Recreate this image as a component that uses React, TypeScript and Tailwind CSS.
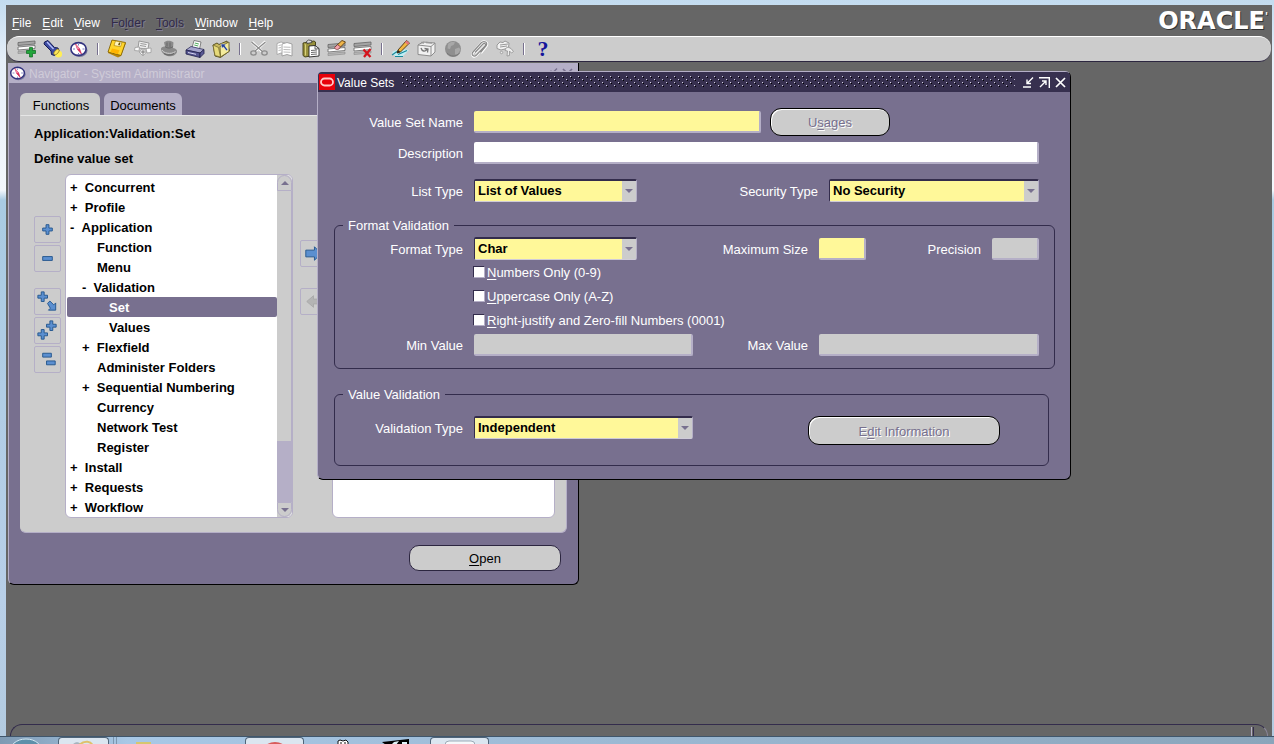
import { useState } from "react";
import type { ReactNode } from "react";

const FONT = "font-['Liberation_Sans',Arial,sans-serif]";

type IconProps = { children: ReactNode; size?: string };

function Icon({ children, size = "size-5" }: IconProps) {
    return (
        <svg viewBox="0 0 20 20" className={`${size} shrink-0`} fill="none" aria-hidden="true">
            {children}
        </svg>
    );
}

function FormLines({ y = 4 }: { y?: number }) {
    return (
        <g transform={`translate(0 ${y})`}>
            <path d="M1 1.500 18 0v3L1 4.500z" fill="#a5a5a5" stroke="#666" strokeWidth=".8" />
            <path d="M1 6 18 4.500v3L1 9z" fill="#fff" stroke="#666" strokeWidth=".8" />
            <path d="M1 10.500 18 9v2L1 12.500z" fill="#b9b9b9" stroke="#888" strokeWidth=".6" />
        </g>
    );
}

function CompassIcon({ size }: { size?: string }) {
    return (
        <Icon size={size}>
            <ellipse cx="10.500" cy="11.500" rx="8" ry="6.500" fill="#77779c" />
            <ellipse cx="9.500" cy="10" rx="7.600" ry="6.400" fill="#fff" stroke="#33337f" strokeWidth="1.600" />
            <path d="M9.500 5v1.500M9.500 14v1.500M4 10h2M13.500 10h2" stroke="#7a7ac0" />
            <path d="m6.500 5 4 4.500 2 5.500-4-4.500z" fill="#e52a5c" stroke="#c01848" strokeWidth=".6" />
            <path d="m6.500 5 4 4.500-2 1z" fill="#f38aa5" />
        </Icon>
    );
}

function NewIcon() {
    return (
        <Icon>
            <FormLines y={2} />
            <path d="M12.500 8.500h3v3h3v3h-3v3.500h-3v-3.500h-3v-3h3z" fill="#22a53b" stroke="#0c6b20" strokeWidth=".7" />
        </Icon>
    );
}

function FindIcon() {
    return (
        <Icon>
            <circle cx="15.500" cy="15" r="3.600" fill="#ffee55" />
            <path d="M1.500 3 5 1.500l6.500 7 3.500.5 1 3-4.500 4.500-3-1-.5-3.500L1 5z" fill="#3c4ba0" stroke="#141b55" />
            <path d="m4 3 6.500 7" stroke="#b9c4ff" strokeWidth="1.300" />
            <ellipse cx="13.500" cy="13" rx="1.800" ry="3.500" transform="rotate(42 13.500 13)" fill="#ffe65a" stroke="#8d7a20" strokeWidth=".7" />
        </Icon>
    );
}

function SaveIcon() {
    return (
        <Icon>
            <path d="m5 1 14 3-5 13-3 1.500L1 14z" fill="#b8860b" />
            <path d="m5 1 13.500 2.500-4.500 13L1 13z" fill="#ffd42a" stroke="#7a5a00" strokeWidth=".8" />
            <path d="m8.500 2 6.500 1.200-1.500 4.500L7 6.500z" fill="#fff6c0" stroke="#a37b00" strokeWidth=".6" />
            <path d="m12 3.500 1.500.3-.9 2.600-1.500-.3z" fill="#6a5200" />
            <path d="m5 9.500 7.500 1.800-1.700 4L3.500 13z" fill="#ffb400" />
        </Icon>
    );
}

function NextStepIcon() {
    return (
        <Icon>
            <path d="m6 2 10 2-1 6-10-1z" fill="#eee" stroke="#999" />
            <path d="m7.500 4.500 6 1M7 6.500l6 1" stroke="#999" />
            <path d="M2 8.500 6.500 8l-.5 4-4.500-.5zM6 13l4-3.500L13.500 13 10 17zM13 9.500l5-.5v4.500L14 14z" fill="#fafafa" stroke="#9c9c9c" strokeWidth=".8" />
            <path d="M10 10.500v5.500M7.500 13h5" stroke="#777" />
        </Icon>
    );
}

function HatIcon() {
    return (
        <Icon>
            <path d="M2 10c0-2 3-2.500 4-2.500L5 3.500C7 1 12 1 14.500 3.500L14 9c3 .5 4.500 2 4 4-1 3.500-6 5-9.500 4S2 13 2 10z" fill="#8a8a8a" />
            <path d="M3 11c1 3 9 5 13.500 1.500" stroke="#cfcfcf" />
            <path d="M6 7.500c2 2 6 2 8 0M8 3.500v4M11 3.500v4.500" stroke="#666" />
            <path d="M5 14.500c3 2 7 2 10 0" stroke="#5f5f5f" />
        </Icon>
    );
}

function PrintIcon() {
    return (
        <Icon>
            <path d="m7 9 2-7.500 7 1.500-1.500 7z" fill="#fff" stroke="#666" strokeWidth=".8" />
            <path d="m9.800 4 4 1M9.300 6l4 1" stroke="#4cab5a" />
            <path d="m1 11 5-3.500 13 3L15 14z" fill="#a5a5cc" stroke="#32325e" strokeWidth=".8" />
            <path d="m1 11 14 3v4.500L1 15z" fill="#55558f" stroke="#20204a" strokeWidth=".8" />
            <path d="m15 14 4-3.500v4l-4 4z" fill="#5b5b96" stroke="#20204a" strokeWidth=".8" />
            <path d="m3 13.500 8 1.800" stroke="#d8d8f2" />
        </Icon>
    );
}

function CloseFormIcon() {
    return (
        <Icon>
            <path d="m2 6 4-2 2 1.500L16 2l2.500 10-9 6.500L4 17z" fill="#c8b95e" stroke="#4f481c" strokeWidth=".9" />
            <path d="M9 7.500 18 3v9.500L9.500 18z" fill="#f4ec9c" stroke="#6b6228" strokeWidth=".9" />
            <path d="m2 6 5.500 2.500 2 9.500L4 16.500z" fill="#e6da7a" stroke="#6b6228" strokeWidth=".7" />
            <path d="m10 5 5 .2-1.200 1.500 3 4-1.500 1-2.800-3.700-1.500 1.200z" fill="#1f3f9a" stroke="#fff" strokeWidth=".4" />
        </Icon>
    );
}

function CutIcon() {
    return (
        <Icon>
            <path d="m3 3 10 9.500M16.500 2.500 6.500 12" stroke="#fff" strokeWidth="2.800" />
            <path d="m2.500 3 11 9.500M16.500 3 6 12" stroke="#8b8b8b" strokeWidth="1.300" />
            <ellipse cx="4.500" cy="14" rx="2.700" ry="2.100" stroke="#8b8b8b" strokeWidth="1.300" />
            <ellipse cx="15.500" cy="14" rx="2.700" ry="2.100" stroke="#8b8b8b" strokeWidth="1.300" />
        </Icon>
    );
}

function CopyIcon() {
    return (
        <Icon>
            <path d="m2 4.500 4-1.500 4 1v11L6 14l-4 1.500z" fill="#fff" stroke="#a5a5a5" strokeWidth=".9" />
            <path d="m7 5 5-1.500L17 5v12l-5-1.500L7 17z" fill="#fff" stroke="#9a9a9a" strokeWidth=".9" />
            <path d="M3.500 6.500 6 6M3.500 9 6 8.500M3.500 11.500 6 11M8.500 8l7 .3M8.500 10.500l7 .3M8.500 13l7 .3" stroke="#aaa" strokeWidth=".8" />
        </Icon>
    );
}

function PasteIcon() {
    return (
        <Icon>
            <path d="m2 4 11-2 1.500 1v13L4 18l-2-1.500z" fill="#98913d" stroke="#3e3b12" strokeWidth=".9" />
            <path d="m3.500 5 1 .5v11" stroke="#d9d27b" />
            <path d="m5.500 2.500 2-1.500 3 .5.500 2-5 1z" fill="#ddd" stroke="#333" strokeWidth=".8" />
            <path d="m8 7 6-.5 4 3V17l-10 1z" fill="#fff" stroke="#222" strokeWidth=".9" />
            <path d="M14 6.500v3.500l4-.3M10 11.500l6-.5M10 13.500l6-.5M10 15.500l6-.5" stroke="#444" strokeWidth=".8" />
        </Icon>
    );
}

function ClearIcon() {
    return (
        <Icon>
            <FormLines />
            <path d="m8 8 7-6.500L18.500 3 11.500 10z" fill="#f0b64a" stroke="#5a3a0c" strokeWidth=".9" />
            <path d="m8 8 2.500-2.300 3.200 2.200L11.500 10c-1.500 1.500-5-.5-3.500-2z" fill="#f5a3ac" stroke="#6b3036" strokeWidth=".7" />
        </Icon>
    );
}

function DeleteIcon() {
    return (
        <Icon>
            <FormLines y={3} />
            <path d="m10.500 10.500 7 7.500M17.500 10 11 18" stroke="#d4141c" strokeWidth="2.300" />
        </Icon>
    );
}

function EditIcon() {
    return (
        <Icon>
            <path d="m1 13 7-3 10 1-6 6H4z" fill="#bfeef4" />
            <path d="m1 16 5-3.500M4 17.500h8M7 15.500l9-4" stroke="#188b9c" strokeWidth="1.200" />
            <path d="m7 11 8.500-9.500L18.500 4 9.500 13 6 14z" fill="#f2b640" stroke="#4a300c" strokeWidth=".9" />
            <path d="m15.500 1.500 3 2.500-1.700 1.700-2.900-2.400z" fill="#e5737b" />
            <path d="m7 11-1 3 3.500-1z" fill="#222" />
        </Icon>
    );
}

function ZoomIcon() {
    return (
        <Icon>
            <path d="m1 6 5-3 12 1v9l-4 4-13-1.500z" fill="#f1f1f1" stroke="#8d8d8d" />
            <path d="m1 6 13 1.500L18 4M14 7.500V17" stroke="#8d8d8d" />
            <path d="m4 3.500 3 .5M9 3.500l6 .5" stroke="#999" strokeWidth="1.500" />
            <path d="M4 9c1 3.500 4 4 6 1.500M7.500 9.500l3.500.5-.5 3.500" stroke="#777" strokeWidth="1.300" />
        </Icon>
    );
}

function GlobeIcon() {
    return (
        <Icon>
            <circle cx="10" cy="10" r="8" fill="#8f8f8f" />
            <path d="M5 5c2-2 5-2.500 7-1.500L10.500 6 8 7l-1 3-2.500-.5zM12 10l4-1.500 1.500 2L15 15l-3 .5z" fill="#a8a8a8" />
            <path d="M4 14c3 3.500 9 4.500 12.500 0" stroke="#777" />
        </Icon>
    );
}

function ClipIcon() {
    return (
        <Icon>
            <path d="m6 14 8-9c1.500-1.500 3.500 0 2 1.800L7.500 16.500c-2.500 2.500-6 0-3.500-3L12 4c3-3.500 8-.5 5.500 3L12 14" stroke="#fff" strokeWidth="2.200" />
            <path d="m6 13.500 8-8.500c1.500-1.500 3.500 0 2 1.800L7.500 16c-2.500 2.500-6 0-3.500-3L12 4c3-3 7.500-.5 5 3l-5.500 6.500" stroke="#8a8a8a" strokeWidth="1.200" />
        </Icon>
    );
}

function FolderToolsIcon() {
    return (
        <Icon>
            <path d="m2 6 3-3 3 .5L10 2l4 2-.5 5L6 11 2 9.500z" fill="#f2f2f2" stroke="#989898" />
            <path d="m5 6 8-1M5 8l7-1" stroke="#989898" />
            <path d="M10.500 9.500 13 8l3 1.500 2.500 3-2 1.500-2-2v4.500l-2.500.5.5-5-2.500-.5z" fill="#ededed" stroke="#989898" strokeWidth=".9" />
            <path d="m5 13 2-1 1 2-2 1z" fill="#eee" stroke="#989898" strokeWidth=".7" />
        </Icon>
    );
}

function HelpIcon() {
    return <span className="font-['Liberation_Serif',serif] text-[22px] leading-5 font-bold text-[#14149b]">?</span>;
}

const TOOL_GROUPS: [string, () => ReactNode][][] = [
    [["New", NewIcon], ["Find", FindIcon], ["Show Navigator", () => <CompassIcon />]],
    [["Save", SaveIcon], ["Next Step", NextStepIcon], ["Switch Responsibility", HatIcon], ["Print", PrintIcon], ["Close Form", CloseFormIcon]],
    [["Cut", CutIcon], ["Copy", CopyIcon], ["Paste", PasteIcon], ["Clear Record", ClearIcon], ["Delete", DeleteIcon]],
    [["Edit Field", EditIcon], ["Zoom", ZoomIcon], ["Translations", GlobeIcon], ["Attachments", ClipIcon], ["Folder Tools", FolderToolsIcon]],
    [["Help", HelpIcon]],
];

// label with one underlined access key
function Mnemonic({ text, at = 0 }: { text: string; at?: number }) {
    return (
        <span>
            {text.slice(0, at)}
            <span className="underline underline-offset-2">{text[at]}</span>
            {text.slice(at + 1)}
        </span>
    );
}

const MENUS = [
    { text: "File" },
    { text: "Edit" },
    { text: "View" },
    { text: "Folder", at: 2, off: true },
    { text: "Tools", off: true },
    { text: "Window" },
    { text: "Help" },
];

function MenuBar() {
    return (
        <header className="flex h-[31px] items-center justify-between pr-1 pl-[6px]">
            <nav className="flex gap-[11px] pt-1 text-xs">
                {MENUS.map((m) => (
                    <button
                        key={m.text}
                        disabled={m.off}
                        className={m.off ? "text-[#302a4a] [text-shadow:1px_1px_0_#807c90]" : "text-white"}
                    >
                        <Mnemonic text={m.text} at={m.at} />
                    </button>
                ))}
            </nav>
            <div className="flex font-['DejaVu_Sans',sans-serif] text-2xl leading-6 font-bold text-white [text-shadow:1px_1px_0_#333]">
                ORACLE<span className="text-[10px] leading-4">'</span>
            </div>
        </header>
    );
}

function Toolbar() {
    return (
        <div className="mx-px flex h-[26px] items-center rounded-xl border-t border-b border-t-white border-b-[#2c2640] bg-[#cccccc] pl-[7px]">
            {TOOL_GROUPS.map((group, i) => (
                <div key={i} className="flex items-center">
                    {i > 0 && (
                        <div className="flex w-3 justify-center">
                            <span className="h-3 w-0.5 border-l border-[#77708e] bg-white" />
                        </div>
                    )}
                    {group.map(([name, Glyph]) => (
                        <button key={name} aria-label={name} className="flex w-[26px] justify-center">
                            <Glyph />
                        </button>
                    ))}
                </div>
            ))}
        </div>
    );
}

type Node = { label: string; level: number; sign?: string };

const TREE: Node[] = [
    { label: "Concurrent", level: 0, sign: "+" },
    { label: "Profile", level: 0, sign: "+" },
    { label: "Application", level: 0, sign: "-" },
    { label: "Function", level: 1 },
    { label: "Menu", level: 1 },
    { label: "Validation", level: 1, sign: "-" },
    { label: "Set", level: 2 },
    { label: "Values", level: 2 },
    { label: "Flexfield", level: 1, sign: "+" },
    { label: "Administer Folders", level: 1 },
    { label: "Sequential Numbering", level: 1, sign: "+" },
    { label: "Currency", level: 1 },
    { label: "Network Test", level: 1 },
    { label: "Register", level: 1 },
    { label: "Install", level: 0, sign: "+" },
    { label: "Requests", level: 0, sign: "+" },
    { label: "Workflow", level: 0, sign: "+" },
];

const INDENT = ["pl-[3px]", "pl-[15px]", "pl-[27px]"];

function Tree() {
    const [selected, setSelected] = useState("Set");

    return (
        <div className="flex w-[228px] rounded-md border border-[#b5afc7] bg-white">
            <ul className="flex-1 pt-0.5 pl-px font-bold">
                {TREE.map((n) => (
                    <li key={n.label}>
                        <button
                            onClick={() => setSelected(n.label)}
                            className={`flex h-5 w-full items-center rounded-xs pt-0.5 whitespace-pre ${INDENT[n.level]} ${
                                selected === n.label ? "bg-[#78708f] text-white" : "text-black"
                            }`}
                        >
                            {n.sign ? <span>{n.sign + "  "}</span> : <span className="w-[15px]" />}
                            {n.label}
                        </button>
                    </li>
                ))}
            </ul>
            <div className="flex w-[15px] flex-col rounded-r-md bg-[#cccccc]">
                <button aria-label="Scroll up" className="flex h-4 items-center justify-center rounded-t-lg border border-[#b5afc7]">
                    <svg viewBox="0 0 8 4" className="h-1 w-2" fill="#78708f"><path d="M0 4 4 0l4 4z" /></svg>
                </button>
                <div className="flex-1 border-r border-[#b5afc7]" />
                <div className="h-[61px] bg-[#b5afc7]" />
                <button aria-label="Scroll down" className="flex h-[15px] items-center justify-center rounded-b-lg border border-[#b5afc7]">
                    <svg viewBox="0 0 8 4" className="h-1 w-2" fill="#78708f"><path d="M0 0h8L4 4z" /></svg>
                </button>
            </div>
        </div>
    );
}

const PLUS = "M-1.500-5h3v3.500H5v3H1.500V5h-3V1.500H-5v-3h3.500z";
const MINUS = "M-5-2H5v4H-5z";

function SideButton({ label, children }: { label: string; children: ReactNode }) {
    return (
        <button aria-label={label} className="flex size-[27px] shrink-0 items-center justify-center rounded-xs border border-[#b5afc7]">
            <svg viewBox="0 0 26 26" className="size-[25px]" fill="#5b8fd0" stroke="#27588f" strokeWidth="1" aria-hidden="true">
                {children}
            </svg>
        </button>
    );
}

function TitleButtons() {
    return (
        <div className="flex items-center gap-[5px]">
            <button aria-label="Minimize">
                <svg viewBox="0 0 11 11" className="size-[11px]" fill="none" stroke="currentColor" strokeWidth="1.400">
                    <path d="M0 10h8M10 .5 4.500 6M4 2.500v4h4" />
                </svg>
            </button>
            <button aria-label="Maximize">
                <svg viewBox="0 0 11 11" className="size-[11px]" fill="none" stroke="currentColor" strokeWidth="1.400">
                    <path d="M0 .7h10.300V11M1 10l5.500-5.500M3 4h4v4" />
                </svg>
            </button>
            <button aria-label="Close">
                <svg viewBox="0 0 11 11" className="size-[11px]" fill="none" stroke="currentColor" strokeWidth="1.700">
                    <path d="m1 1 9 9M10 1 1 10" />
                </svg>
            </button>
        </div>
    );
}

function Navigator() {
    return (
        <section className="absolute top-px left-0.5 w-[571px] rounded-b-md border-r border-b border-l border-r-black border-b-black border-l-[#b5afc7] bg-[#78708f]">
            <div className="flex h-5 items-center gap-0.5 bg-[#b5afc7] pr-[5px] text-[#cfcbd8]">
                <CompassIcon size="size-[18px]" />
                <h2 className="flex-1 pt-0.5 text-xs">Navigator - System Administrator</h2>
                <div className="flex gap-1 pt-px text-[#77708e]">
                    <button aria-label="Restore">
                        <svg viewBox="0 0 11 11" className="size-[11px]" fill="none" stroke="currentColor" strokeWidth="1.400">
                            <path d="M0 10h8M10 .5 4.500 6M4 2.500v4h4" />
                        </svg>
                    </button>
                    <button aria-label="Close navigator">
                        <svg viewBox="0 0 11 11" className="size-[11px]" fill="none" stroke="currentColor" strokeWidth="1.700">
                            <path d="m1 1 9 9M10 1 1 10" />
                        </svg>
                    </button>
                </div>
            </div>
            <div className="px-[11px] pt-[10px] pb-[13px]">
                <div role="tablist" className="flex gap-1">
                    <button role="tab" aria-selected="true" className="h-[22px] w-20 rounded-t-md bg-[#cccccc] pt-1 pl-0.5 text-center">
                        Functions
                    </button>
                    <button role="tab" aria-selected="false" className="h-[22px] w-[78px] rounded-t-md bg-[#b5afc7] pt-1 text-center">
                        Documents
                    </button>
                </div>
                <div className="rounded-b-md border border-t-[#e6e6e6] border-r-[#b5afc7] border-b-[#b5afc7] border-l-[#cccccc] bg-[#cccccc] pt-[5px] pr-[11px] pb-[14px] pl-[13px]">
                    <div className="leading-[25px] font-bold">
                        <p>Application:Validation:Set</p>
                        <p>Define value set</p>
                    </div>
                    <div className="mt-[3px] flex">
                        <div className="flex w-[31px] flex-col gap-0.5 pt-[42px]">
                            <SideButton label="Expand">
                                <path d={PLUS} transform="translate(13 13)" />
                            </SideButton>
                            <SideButton label="Collapse">
                                <path d={MINUS} transform="translate(13 13)" />
                            </SideButton>
                            <div className="h-3" />
                            <SideButton label="Expand branch">
                                <path d={PLUS} transform="translate(8 8)" />
                                <path d="m13 15 2.500-2.500 4 4 2-2V22H14l2-2z" />
                            </SideButton>
                            <SideButton label="Expand all">
                                <path d={PLUS} transform="translate(17 8)" />
                                <path d={PLUS} transform="translate(8 17)" />
                            </SideButton>
                            <SideButton label="Collapse all">
                                <path d="M8 6.500h9v4H8zM12 14.500h9v4h-9z" />
                            </SideButton>
                        </div>
                        <Tree />
                        <div className="flex w-[39px] flex-col items-start gap-[21px] pt-[66px] pl-[7px]">
                            <SideButton label="Add to list">
                                <path d="M5 9.500h9V6l7 7-7 7v-3.500H5z" />
                            </SideButton>
                            <SideButton label="Remove from list">
                                <path d="M20 10.500h-7V7l-7 6 7 6v-3.500h7z" fill="#b4b4b4" stroke="#aaa" />
                            </SideButton>
                        </div>
                        <div className="flex-1 rounded-md border border-[#b5afc7] bg-white" />
                    </div>
                </div>
                <div className="flex justify-end pt-3 pr-[6px]">
                    <button className="h-[26px] w-[152px] rounded-[10px] border border-[#2c2640] bg-[#cccccc] pt-0.5 text-center">
                        <Mnemonic text="Open" />
                    </button>
                </div>
            </div>
        </section>
    );
}

function Label({ htmlFor, className = "", children }: { htmlFor: string; className?: string; children: ReactNode }) {
    return (
        <label htmlFor={htmlFor} className={`pt-0.5 text-right whitespace-nowrap text-white ${className}`}>
            {children}
        </label>
    );
}

function TextField({ id, className, disabled }: { id: string; className: string; disabled?: boolean }) {
    return (
        <input
            id={id}
            type="text"
            disabled={disabled}
            className={`h-[22px] rounded-xs border-r-2 border-b-2 border-[#b5afc7] px-1 font-bold outline-none ${className}`}
        />
    );
}

function DropDown({ id, options, className }: { id: string; options: string[]; className: string }) {
    return (
        <div className={`relative h-[23px] rounded-xs border border-t-2 border-[#332c4c] border-r-[#b5afc7] border-b-[#cfcbd8] ${className}`}>
            <select id={id} className="block h-full w-full appearance-none bg-[#fff899] pr-4 pl-[3px] leading-5 font-bold text-black outline-none">
                {options.map((o) => (
                    <option key={o}>{o}</option>
                ))}
            </select>
            <span className="pointer-events-none absolute inset-y-0 right-0 flex w-[14px] items-center justify-center bg-[#cccccc]">
                <svg viewBox="0 0 8 4" className="h-1 w-2" fill="#78708f"><path d="M0 0h8L4 4z" /></svg>
            </span>
        </div>
    );
}

function PillButton({ text, at, className }: { text: string; at: number; className: string }) {
    return (
        <button
            disabled
            className={`rounded-[11px] border border-black bg-[#cccccc] pt-0.5 text-center text-[#77708e] shadow-[inset_1px_1px_0_#fff] [text-shadow:1px_1px_0_#fff] ${className}`}
        >
            <Mnemonic text={text} at={at} />
        </button>
    );
}

const CHECKS = ["Numbers Only (0-9)", "Uppercase Only (A-Z)", "Right-justify and Zero-fill Numbers (0001)"];

function ValueSets() {
    return (
        <section className="absolute top-[9px] left-[311px] w-[754px] rounded-md border border-t-[#b5afc7] border-r-black border-b-black border-l-[#b5afc7] bg-[#78708f]">
            <div className="flex h-5 items-center rounded-t-sm bg-[#37304f] pr-1 pl-px text-white">
                <svg viewBox="0 0 16 16" className="size-4" aria-hidden="true">
                    <path d="M0 0h16v16H0z" fill="#e8000b" />
                    <rect x="2" y="4.500" width="12" height="7" rx="3.500" fill="none" stroke="#ffc9c9" strokeWidth="1.800" />
                </svg>
                <h2 className="pt-0.5 pl-0.5 text-xs">Value Sets</h2>
                <svg className="mx-2 h-3 flex-1" aria-hidden="true">
                    <defs>
                        <pattern id="grip" width="8" height="6" patternUnits="userSpaceOnUse">
                            <path d="M1 1h1v1H1zM5 4h1v1H5z" fill="#000" />
                            <path d="M0 0h1v1H0zM4 3h1v1H4z" fill="#d3cfe0" />
                        </pattern>
                    </defs>
                    <rect width="100%" height="12" fill="url(#grip)" />
                </svg>
                <TitleButtons />
            </div>
            <form className="pt-4 pr-[15px] pb-[13px] pl-4" onSubmit={(e) => e.preventDefault()}>
                <div className="flex h-7 items-center pl-px">
                    <Label htmlFor="name" className="w-32">Value Set Name</Label>
                    <TextField id="name" className="ml-[11px] w-[287px] bg-[#fff899]" />
                    <PillButton text="Usages" at={1} className="ml-[9px] h-7 w-[120px]" />
                </div>
                <div className="mt-[6px] flex items-center gap-[11px] pr-4 pl-px">
                    <Label htmlFor="description" className="w-32">Description</Label>
                    <TextField id="description" className="flex-1 bg-white" />
                </div>
                <div className="mt-[15px] flex items-center gap-[11px] pr-4 pl-px">
                    <Label htmlFor="list-type" className="w-32">List Type</Label>
                    <DropDown id="list-type" options={["List of Values", "Long List of Values", "Pop List"]} className="w-[163px]" />
                    <Label htmlFor="security" className="flex-1">Security Type</Label>
                    <DropDown id="security" options={["No Security", "Hierarchical Security"]} className="w-[210px]" />
                </div>

                <fieldset className="mt-[13px] rounded-md border border-[#332c4c] pr-[15px] pb-3">
                    <legend className="ml-2 h-5 px-[5px] pt-px leading-5 text-white">Format Validation</legend>
                    <div className="flex items-center gap-[11px] pt-0.5">
                        <Label htmlFor="format" className="w-32">Format Type</Label>
                        <DropDown id="format" options={["Char", "Number", "Date"]} className="w-[163px]" />
                        <Label htmlFor="max-size" className="flex-1">Maximum Size</Label>
                        <TextField id="max-size" className="w-[47px] bg-[#fff899]" />
                        <Label htmlFor="precision" className="w-[104px]">Precision</Label>
                        <TextField id="precision" disabled className="w-[47px] bg-[#cccccc]" />
                    </div>
                    <div className="pl-[138px] text-white">
                        {CHECKS.map((c) => (
                            <label key={c} className="flex h-6 w-fit items-center gap-[2px] pt-px">
                                <input
                                    type="checkbox"
                                    className="mb-0.5 size-3 appearance-none border border-t-[#332c4c] border-r-[#b5afc7] border-b-[#b5afc7] border-l-[#332c4c] bg-white checked:bg-[#332c4c]"
                                />
                                <Mnemonic text={c} />
                            </label>
                        ))}
                    </div>
                    <div className="flex items-center gap-[11px] pt-0.5">
                        <Label htmlFor="min" className="w-32">Min Value</Label>
                        <TextField id="min" disabled className="w-[219px] bg-[#cccccc]" />
                        <Label htmlFor="max" className="flex-1">Max Value</Label>
                        <TextField id="max" disabled className="w-[220px] bg-[#cccccc]" />
                    </div>
                </fieldset>

                <fieldset className="mt-[15px] mr-[6px] rounded-md border border-[#332c4c] pr-12 pb-5">
                    <legend className="ml-2 h-5 px-[5px] pt-px leading-5 text-white">Value Validation</legend>
                    <div className="flex items-start gap-[11px] pt-3">
                        <div className="flex items-center gap-[11px]">
                            <Label htmlFor="validation" className="w-32">Validation Type</Label>
                            <DropDown id="validation" options={["Independent", "Dependent", "None", "Table"]} className="w-[219px]" />
                        </div>
                        <PillButton text="Edit Information" at={1} className="ml-auto h-[29px] w-48" />
                    </div>
                </fieldset>
            </form>
        </section>
    );
}

function StatusBar() {
    return (
        <footer className="mr-1 ml-1 flex h-3 justify-end rounded-t-xl border-t border-r border-l border-t-[#332c4c] border-r-[#8a869a] border-l-[#332c4c] pt-0.5 pr-[13px]">
            <span className="w-[3px] border-r border-l border-r-[#332c4c] border-l-[#b5afc7]" />
        </footer>
    );
}

function TaskButton({ label, className, children }: { label: string; className: string; children: ReactNode }) {
    return (
        <button
            aria-label={label}
            className={`flex h-2 items-start justify-center overflow-hidden rounded-t-sm border-x border-t border-[#4f6478] bg-[#dbe6f0] ${className}`}
        >
            {children}
        </button>
    );
}

function Taskbar() {
    return (
        <div className="flex h-2 items-start overflow-hidden border-t border-[#40566b] bg-linear-to-r from-[#7e9ab3] via-[#a8c8e6] via-10% to-[#8aa5bb]">
            <button aria-label="Start" className="ml-[10px] w-8">
                <svg viewBox="0 0 32 8" className="h-2 w-8"><ellipse cx="16" cy="16" rx="17" ry="14" fill="#5d90aa" stroke="#d5e8f2" /></svg>
            </button>
            <TaskButton label="Explorer" className="ml-4 w-[51px]">
                <svg viewBox="0 0 30 8" className="h-2 w-[30px]"><path d="M3 8c2-5 8-5 10 0" fill="#a5b3bd" /><path d="M10 7c6-5 12-4 14 1" fill="none" stroke="#dfc16a" strokeWidth="2" /></svg>
            </TaskButton>
            <span className="ml-1 h-2 w-1 border-x border-[#7c96ae]" />
            <svg viewBox="0 0 20 8" className="ml-[18px] h-2 w-5" aria-hidden="true"><path d="M1 5h15v3H1z" fill="#d6c66f" /></svg>
            <TaskButton label="Browser" className="ml-[90px] w-[59px]">
                <svg viewBox="0 0 24 8" className="h-2 w-6"><ellipse cx="12" cy="10" rx="10" ry="6" fill="#d95b5b" /></svg>
            </TaskButton>
            <svg viewBox="0 0 14 8" className="ml-8 h-2 w-[14px]" aria-hidden="true"><path d="M2 8V4l2-1 3 1 3-1 2 2v3z" fill="#fff" stroke="#111" /><path d="M5 5v2M9 5v2" stroke="#111" /></svg>
            <svg viewBox="0 0 28 8" className="ml-8 h-2 w-7" aria-hidden="true"><path d="M0 5 27 2v6H4z" fill="#000" /><path d="m9 8 3-3 5-1-3 4zM20 5h5v2h-5z" fill="#dff3f8" /></svg>
            <TaskButton label="Java" className="ml-5 w-[59px]">
                <svg viewBox="0 0 32 8" className="h-2 w-8"><rect x="1" y="3" width="30" height="12" rx="4" fill="#f5f8fb" stroke="#9cabb8" /></svg>
            </TaskButton>
        </div>
    );
}

export default function App() {
    return (
        <div className={`flex h-screen flex-col overflow-hidden text-[13px] leading-4 text-black ${FONT}`}>
            <div className="flex min-h-0 flex-1 flex-col bg-[linear-gradient(180deg,#c3dcf0_0px,#e6eff8_60px,#f4f8fc_190px,#a9cbe2_200px,#b8cfe8_600px,#b3cbe0_100%)] pt-[5px] pr-0.5 pl-[6px]">
                <div className="flex min-h-0 flex-1 flex-col bg-[#666666]">
                    <MenuBar />
                    <Toolbar />
                    <main className="relative min-h-0 flex-1">
                        <Navigator />
                        <ValueSets />
                    </main>
                    <StatusBar />
                </div>
            </div>
            <Taskbar />
        </div>
    );
}
